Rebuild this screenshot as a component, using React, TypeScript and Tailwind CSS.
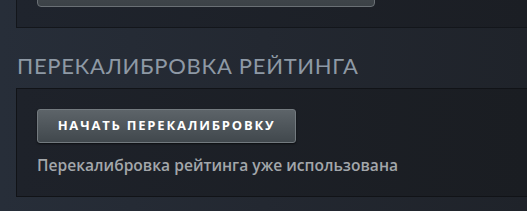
export default function App() {
  return (
    <div className="w-[527px] h-[211px] overflow-hidden bg-gradient-to-r from-[#272e39] via-[#232831] to-[#1f232a] font-['Open_Sans',sans-serif]">
      <div className="ml-4 h-[28px] bg-gradient-to-r from-[#1f242d] to-[#1b1e24] border-l border-b border-[#13161b] relative">
        <div className="absolute left-[20px] top-[-30px] w-[338px] h-[37px] rounded-sm border border-[#6a7075] bg-gradient-to-b from-[#4a5055] to-[#3c4247]" />
      </div>
      <h2 className="ml-[17px] mt-[21px] text-[22px] leading-[34px] font-normal tracking-[0.7px] text-[#8e99a5] font-['Lato',sans-serif]">
        ПЕРЕКАЛИБРОВКА РЕЙТИНГА
      </h2>
      <div className="ml-4 mt-[5px] h-[109px] bg-gradient-to-r from-[#1e222a] to-[#1a1d22] border-l border-t border-b border-[#111317] pl-5 pt-5">
        <button className="h-[34px] w-[259px] rounded-[3px] border border-[#737a7f] bg-gradient-to-b from-[#5d6469] to-[#41484d] text-white text-[13px] font-bold tracking-[1.8px] shadow-[0_1px_2px_rgba(0,0,0,0.6)]">
          НАЧАТЬ ПЕРЕКАЛИБРОВКУ
        </button>
        <p className="mt-[11px] text-[15.6px] font-semibold text-[#a3a7ab]">
          Перекалибровка рейтинга уже использована
        </p>
      </div>
    </div>
  );
}
